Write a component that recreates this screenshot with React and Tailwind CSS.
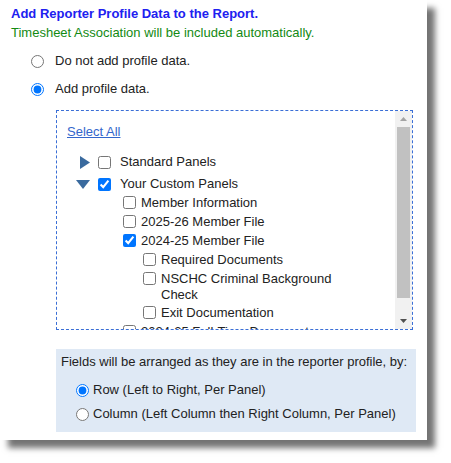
import React from 'react';

// Tree of profile panels shown in the scroll box
const childPanels = [
  { label: 'Member Information', checked: false },
  { label: '2025-26 Member File', checked: false },
  {
    label: '2024-25 Member File',
    checked: true,
    children: [
      { label: 'Required Documents' },
      { label: 'NSCHC Criminal Background Check' },
      { label: 'Exit Documentation' },
    ],
  },
  { label: '2024-25 Full-Time Documents', checked: false },
];

const Arrow = ({ open }) =>
  open ? (
    <svg width="14" height="9" viewBox="0 0 14 9">
      <polygon points="0,0 14,0 7,9" fill="#3a6a9e" />
    </svg>
  ) : (
    <svg width="10" height="13" viewBox="0 0 10 13">
      <polygon points="0,0 10,6.5 0,13" fill="#3a6a9e" />
    </svg>
  );

const Check = ({ checked }) => (
  <input
    type="checkbox"
    defaultChecked={checked}
    className="m-0 mt-[3px] mb-[3px] h-[13px] w-[13px] shrink-0"
  />
);

const ScrollBar = () => (
  <div className="flex w-[17px] shrink-0 flex-col bg-[#f1f1f1]">
    <div className="flex h-[16px] items-center justify-center">
      <svg width="7" height="4" viewBox="0 0 7 4">
        <polygon points="0,4 7,4 3.5,0" fill="#a3a3a3" />
      </svg>
    </div>
    <div className="mx-[2px] h-[171px] bg-[#c1c1c1]" />
    <div className="flex-1" />
    <div className="flex h-[16px] items-center justify-center">
      <svg width="7" height="4" viewBox="0 0 7 4">
        <polygon points="0,0 7,0 3.5,4" fill="#505050" />
      </svg>
    </div>
  </div>
);

export default function App() {
  return (
    <div className="min-h-screen bg-white font-['Liberation_Sans',Arial,sans-serif] text-[13px] leading-4 text-[#222]">
      <div className="h-[440px] w-[427px] bg-white pt-[6px] pl-[11px] shadow-[8px_8px_6px_rgba(0,0,0,0.55)]">
        <div className="font-bold text-[#2020f0]">Add Reporter Profile Data to the Report.</div>
        <div className="mt-[3px] text-[#138a13]">Timesheet Association will be included automatically.</div>

        {/* Profile data choice */}
        <div className="mt-[6px]">
          <label className="flex h-[28px] items-center pl-[20px]">
            <input type="radio" name="profile" className="m-0 h-[13px] w-[13px]" />
            <span className="ml-[11px]">Do not add profile data.</span>
          </label>
          <label className="flex h-[28px] items-center pl-[20px]">
            <input type="radio" name="profile" defaultChecked className="m-0 h-[13px] w-[13px]" />
            <span className="ml-[11px]">Add profile data.</span>
          </label>
        </div>

        {/* Panel picker */}
        <div className="mt-[7px] ml-[45px] flex h-[220px] w-[357px] border border-dashed border-[#3b6fd6]">
          <div className="flex-1 overflow-hidden">
            <div className="pt-[13px] pl-[10px]">
              <a href="#" className="text-[#3366cc] underline">Select All</a>
            </div>
            <div className="mt-[11px]">
              <div className="flex h-[22px] items-center pl-[17px]">
                <span className="flex w-[16px] justify-end"><Arrow /></span>
                <input type="checkbox" className="m-0 ml-[8px] h-[13px] w-[13px]" />
                <span className="ml-[9px]">Standard Panels</span>
              </div>
              <div className="flex h-[22px] items-center pl-[17px]">
                <span className="flex w-[16px] justify-end"><Arrow open /></span>
                <input type="checkbox" defaultChecked className="m-0 ml-[8px] h-[13px] w-[13px]" />
                <span className="ml-[9px]">Your Custom Panels</span>
              </div>
              <div className="-mt-[2px]">
                {childPanels.map((panel) => (
                  <div key={panel.label}>
                    <div className="flex items-start pl-[66px]">
                      <Check checked={panel.checked} />
                      <span className="ml-[5px] pt-[2px] whitespace-nowrap">{panel.label}</span>
                    </div>
                    {panel.children &&
                      panel.children.map((item) => (
                        <div key={item.label} className="flex items-start pl-[86px]">
                          <Check />
                          <span className="ml-[5px] max-w-[180px] pt-[2px]">{item.label}</span>
                        </div>
                      ))}
                  </div>
                ))}
              </div>
            </div>
          </div>
          <ScrollBar />
        </div>

        {/* Arrangement options */}
        <div className="mt-[19px] ml-[45px] w-[360px] bg-[#dfe9f5] pt-[5px] pr-[4px] pb-[6px] pl-[5px]">
          <div>Fields will be arranged as they are in the reporter profile, by:</div>
          <div className="mt-[8px] pl-[15px]">
            <label className="flex h-[24px] items-center">
              <input type="radio" name="arrange" defaultChecked className="m-0 h-[13px] w-[13px]" />
              <span className="ml-[4px]">Row (Left to Right, Per Panel)</span>
            </label>
            <label className="flex h-[24px] items-center">
              <input type="radio" name="arrange" className="m-0 h-[13px] w-[13px]" />
              <span className="ml-[4px]">Column (Left Column then Right Column, Per Panel)</span>
            </label>
          </div>
        </div>
      </div>
    </div>
  );
}
